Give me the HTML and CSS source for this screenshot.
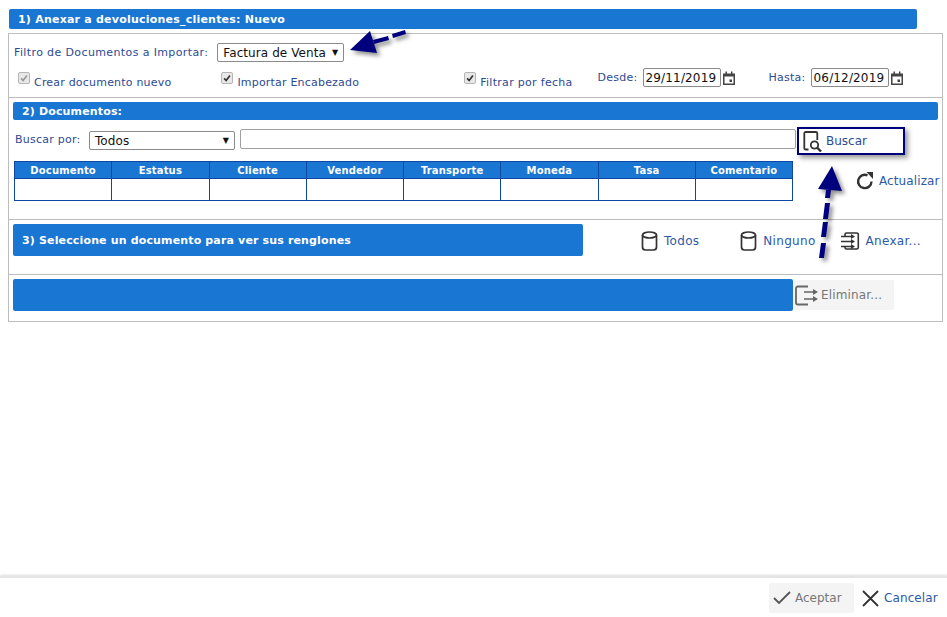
FILE: index.html
```html
<!DOCTYPE html>
<html lang="es">
<head>
<meta charset="utf-8">
<title>Anexar a devoluciones_clientes</title>
<link rel="stylesheet" href="styles.css">
</head>
<body>
<svg width="0" height="0" class="defs">
  <symbol id="i-cal" viewBox="0 0 12 14"><path d="M0 2.500h2.500V.5h1.500v2h4v-2h1.500v2H12V14H0zM1.500 5.500V12.500h9V5.500z" fill-rule="evenodd"/><rect x="6.500" y="8.500" width="2.500" height="2.500"/></symbol>
  <symbol id="i-db" viewBox="0 0 17 20"><g fill="none" stroke="#333" stroke-width="1.700"><ellipse cx="8.500" cy="4" rx="7" ry="3"/><path d="M1.500 4v12c0 1.800 1.200 3 3 3h8c1.800 0 3-1.200 3-3V4"/></g></symbol>
  <symbol id="i-in" viewBox="0 0 19 18"><g fill="none" stroke="#333"><path d="M4 4V2.500C4 1.500 4.500 1 5.500 1H15.500c1 0 1.800.5 1.800 1.500v13c0 1-.8 1.500-1.800 1.500H5.500C4.500 17 4 16.500 4 15.500V14" stroke-width="1.600"/><path d="M0 4.500h11M0 9.500h11M0 14.500h11" stroke-width="1.400"/></g><path fill="#333" d="M10 2l4 2.500L10 7zM10 7l4 2.500L10 12zM10 12l4 2.500L10 17z"/></symbol>
  <symbol id="i-out" viewBox="0 0 23 21"><g fill="none" stroke="#666"><path d="M13 1.500H3C2 1.500 1 2.200 1 3.300v14.400c0 1.100 1 1.800 2 1.800h10" stroke-width="1.800"/><path d="M9 7h11M9 14h11" stroke-width="1.600"/></g><path fill="#666" d="M18 4l5 3-5 3zM18 11l5 3-5 3z"/></symbol>
</svg>
<div class="page">
  <main class="main">
    <h2 class="bar bar-top">1) Anexar a devoluciones_clientes: Nuevo</h2>
    <div class="panel">
      <section class="sec sec-filter">
        <div class="filter-row">
          <span class="lbl lbl-wide">Filtro de Documentos a Importar:</span>
          <div class="sel sel-doc"><span>Factura de Venta</span><i class="caret">▼</i></div>
        </div>
        <div class="check-row">
          <label class="chk chk-a"><i class="box off"><svg viewBox="0 0 12 12"><path d="M2.500 6.500l2.500 2.500 4.500-6" fill="none" stroke-width="2"/></svg></i><span>Crear documento nuevo</span></label>
          <label class="chk chk-b"><i class="box"><svg viewBox="0 0 12 12"><path d="M2.500 6.500l2.500 2.500 4.500-6" fill="none" stroke-width="2"/></svg></i><span>Importar Encabezado</span></label>
          <label class="chk chk-c"><i class="box"><svg viewBox="0 0 12 12"><path d="M2.500 6.500l2.500 2.500 4.500-6" fill="none" stroke-width="2"/></svg></i><span>Filtrar por fecha</span></label>
          <div class="date date-a"><span class="lbl">Desde:</span><span class="dinp">29/11/2019</span><svg class="cal"><use href="#i-cal"/></svg></div>
          <div class="date date-b"><span class="lbl">Hasta:</span><span class="dinp">06/12/2019</span><svg class="cal"><use href="#i-cal"/></svg></div>
        </div>
      </section>
      <section class="sec sec-docs">
        <div class="split split-thin">
          <h2 class="bar seg-a">2) Documentos:</h2>
          <div class="bar seg-b"></div>
        </div>
        <div class="search-row">
          <span class="lbl">Buscar por:</span>
          <div class="sel sel-by"><span>Todos</span><i class="caret">▼</i></div>
          <div class="sinp"></div>
          <button class="btn-buscar"><svg class="ico-find" viewBox="0 0 20 21"><path d="M5.500 18.500H2.800c-1 0-1.500-.5-1.500-1.500V2.500C1.300 1.500 1.800 1 2.800 1h10c1 0 1.500.5 1.500 1.500V9" fill="none" stroke="#333" stroke-width="1.800"/><circle cx="11.500" cy="14" r="3.700" fill="none" stroke="#333" stroke-width="1.800"/><path d="M14 16.500l4 4" stroke="#333" stroke-width="2.400"/></svg><span>Buscar</span></button>
        </div>
        <div class="table-row">
          <table class="grid">
            <thead><tr><th>Documento</th><th>Estatus</th><th>Cliente</th><th>Vendedor</th><th>Transporte</th><th>Moneda</th><th>Tasa</th><th>Comentario</th></tr></thead>
            <tbody><tr><td></td><td></td><td></td><td></td><td></td><td></td><td></td><td></td></tr></tbody>
          </table>
          <div class="refresh"><svg class="ico-ref" viewBox="0 0 18 18"><path d="M15.500 9.500A6.700 6.700 0 1 1 11.500 3.300" fill="none" stroke="#333" stroke-width="2.400"/><path d="M10.500 0H17v7z" fill="#333"/></svg><span class="link">Actualizar</span></div>
        </div>
      </section>
      <section class="sec sec-sel">
        <h2 class="bar bar-sel">3) Seleccione un documento para ver sus renglones</h2>
        <div class="act act-todos"><svg class="ico-db"><use href="#i-db"/></svg><span class="link">Todos</span></div>
        <div class="act act-ninguno"><svg class="ico-db"><use href="#i-db"/></svg><span class="link">Ninguno</span></div>
        <div class="act act-anexar"><svg class="ico-in"><use href="#i-in"/></svg><span class="link">Anexar...</span></div>
      </section>
      <section class="sec-lines">
        <div class="split split-thick">
          <div class="bar seg-c"></div>
          <div class="bar seg-d"></div>
        </div>
        <div class="disabled btn-elim"><svg class="ico-out"><use href="#i-out"/></svg><span>Eliminar...</span></div>
      </section>
    </div>
  </main>
  <footer class="foot">
    <div class="disabled btn-ok"><svg class="ico-ok" viewBox="0 0 18 14"><path d="M1 7l5 5L17 1" fill="none" stroke="#555" stroke-width="1.800"/></svg><span>Aceptar</span></div>
    <div class="btn-cancel"><svg class="ico-x" viewBox="0 0 17 17"><path d="M1 1l15 15M16 1L1 16" fill="none" stroke="#333" stroke-width="1.800"/></svg><span class="link">Cancelar</span></div>
  </footer>
</div>
<svg class="overlay" viewBox="0 0 947 617">
  <g class="arrow" fill="#00007f">
    <path d="M350 50L370 31l7 22z"/>
    <path d="M373 40l15-4 1 4-15 4zM392 34l13-4 1 4-13 4z"/>
    <path d="M832 166L842 191L818 189z"/>
    <path d="M826 190h5l-1 8h-5zM825 203h5l-2 16h-5zM823 222h5l-2 15h-5zM821 243h5l-2 15h-5z"/>
  </g>
</svg>
</body>
</html>
```
FILE: styles.css
```css
* { box-sizing: border-box; }
html, body { margin: 0; padding: 0; background: #fff; }
body { font-family: "DejaVu Sans", Verdana, sans-serif; font-size: 11px; color: #1f3f8f; position: relative; overflow: hidden; }
.defs { position: absolute; }
.page { height: 617px; display: flex; flex-direction: column; }
.main { flex: 1; padding: 9px 4px 0 8px; }
.bar { margin: 0; background: #1976d2; color: #fff; font-size: 11px; font-weight: 700; border-radius: 2px; display: flex; align-items: center; padding-left: 9px; letter-spacing: .15px; }
.bar-top { height: 20px; width: 908px; margin-left: 1px; letter-spacing: .22px; }
.panel { margin-top: 4px; border: 1px solid #bdbdbd; height: 289px; }
.sec { border-bottom: 1px solid #bdbdbd; }
.sec-filter { height: 64px; padding: 9px 0 0 5px; }
.lbl { color: #2c4a94; white-space: nowrap; letter-spacing: .25px; }
.lbl-wide { letter-spacing: .38px; }
.filter-row { display: flex; align-items: center; height: 19px; gap: 9px; }
.sel { border: 1px solid #8a8a8a; border-radius: 2px; background: #fff; color: #111; font-size: 12px; letter-spacing: .08px; display: flex; align-items: center; justify-content: space-between; height: 19px; padding: 0 5px; }
.sel-doc { width: 127px; }
.caret { font-style: normal; font-size: 8px; color: #111; }
.check-row { display: flex; height: 26px; align-items: flex-start; margin-top: 6px; }
.chk { display: flex; align-items: flex-start; gap: 4px; margin-left: 4px; padding-top: 4px; }
.chk span { padding-top: 4px; color: #2c4a94; white-space: nowrap; letter-spacing: .2px; }
.chk-b { margin-left: 50px; }
.chk-c { margin-left: 105px; }
.chk-c span { letter-spacing: .3px; }
.box { width: 12px; height: 12px; background: #e8e8e8; border: 1px solid #b5b5b5; border-radius: 2px; display: block; flex: none; }
.box svg { display: block; width: 10px; height: 10px; stroke: #333; }
.box.off svg { stroke: #999; }
.date { display: flex; align-items: center; }
.date-a { margin-left: 25px; }
.date-b { margin-left: 34px; }
.date .lbl { margin-right: 5px; }
.dinp { width: 78px; height: 19px; border: 1px solid #8a8a8a; border-radius: 2px; color: #111; font-size: 12px; display: flex; align-items: center; padding-left: 2px; letter-spacing: .15px; }
.cal { width: 12px; height: 14px; margin-left: 2px; fill: #444; }
.sec-docs { height: 122px; padding: 4px 4px 0; }
.split { display: flex; }
.split-thin { height: 18px; }
.seg-a { width: 780px; border-radius: 2px 0 0 2px; }
.seg-b { flex: 1; border-radius: 0 2px 2px 0; }
.search-row { display: flex; align-items: flex-start; margin-top: 9px; height: 25px; padding-left: 2px; }
.search-row .lbl { margin-top: 4px; width: 74px; }
.sel-by { width: 146px; margin-top: 2px; }
.sinp { width: 556px; height: 20px; margin-left: 5px; border: 1px solid #a0a0a0; border-radius: 2px; }
.btn-buscar { margin: -2px 0 0 1px; width: 108px; height: 28px; flex: none; border: 2px solid #00007f; background: #fff; box-shadow: 3px 3px 5px #999; display: flex; align-items: center; gap: 3px; padding: 0 0 0 4px; font: inherit; font-size: 12px; color: #2c4a94; }
.ico-find { width: 20px; height: 21px; }
.table-row { display: flex; align-items: flex-start; margin-top: 7px; padding-left: 1px; }
.grid { border-collapse: collapse; table-layout: fixed; width: 779px; border: 1px solid #0d47a1; flex: none; }
.grid th { height: 17px; padding: 0; background: #1976d2; color: #fff; font-size: 10px; letter-spacing: .15px; border: 1px solid #0d47a1; font-weight: 700; }
.grid td { height: 22px; padding: 0; border: 1px solid #0d47a1; }
.refresh { display: flex; align-items: center; gap: 5px; margin: 11px 0 0 63px; }
.ico-ref { width: 18px; height: 18px; }
.link { color: #2c5aa8; font-size: 12px; white-space: nowrap; letter-spacing: .1px; }
.sec-sel { height: 55px; padding: 4px 4px 0; display: flex; align-items: flex-start; }
.bar-sel { width: 570px; height: 32px; }
.act { display: flex; align-items: center; height: 24px; margin-top: 5px; gap: 6px; }
.act .link { letter-spacing: .3px; }
.ico-db { width: 17px; height: 20px; }
.ico-in { width: 19px; height: 18px; }
.act-todos { margin-left: 58px; }
.act-ninguno { margin-left: 41px; }
.act-anexar { margin-left: 25px; }
.sec-lines { padding: 4px 0 0 4px; display: flex; align-items: flex-start; }
.split-thick { height: 32px; width: 780px; flex: none; }
.seg-c { width: 500px; border-radius: 2px 0 0 2px; padding: 0; }
.seg-d { flex: 1; border-radius: 0 2px 2px 0; padding: 0; }
.disabled { background: #f4f4f4; border-radius: 2px; color: #777; font-size: 12px; display: flex; align-items: center; white-space: nowrap; letter-spacing: .15px; }
.btn-elim { width: 101px; height: 30px; gap: 3px; margin-top: 1px; padding-left: 2px; }
.ico-out { width: 23px; height: 21px; }
.foot { height: 41px; border-top: 2px solid #e4e4e4; box-shadow: 0 -1px 2px #ddd; display: flex; align-items: flex-start; padding: 5px 0 0 769px; }
.btn-ok { width: 85px; height: 30px; gap: 4px; padding-left: 4px; letter-spacing: 0; }
.ico-ok { width: 18px; height: 14px; }
.btn-cancel { display: flex; align-items: center; height: 30px; gap: 5px; margin-left: 8px; }
.ico-x { width: 17px; height: 17px; }
.overlay { position: absolute; left: 0; top: 0; width: 947px; height: 617px; pointer-events: none; }
.arrow { filter: drop-shadow(3px 3px 2px rgba(0,0,0,.45)); }
```
